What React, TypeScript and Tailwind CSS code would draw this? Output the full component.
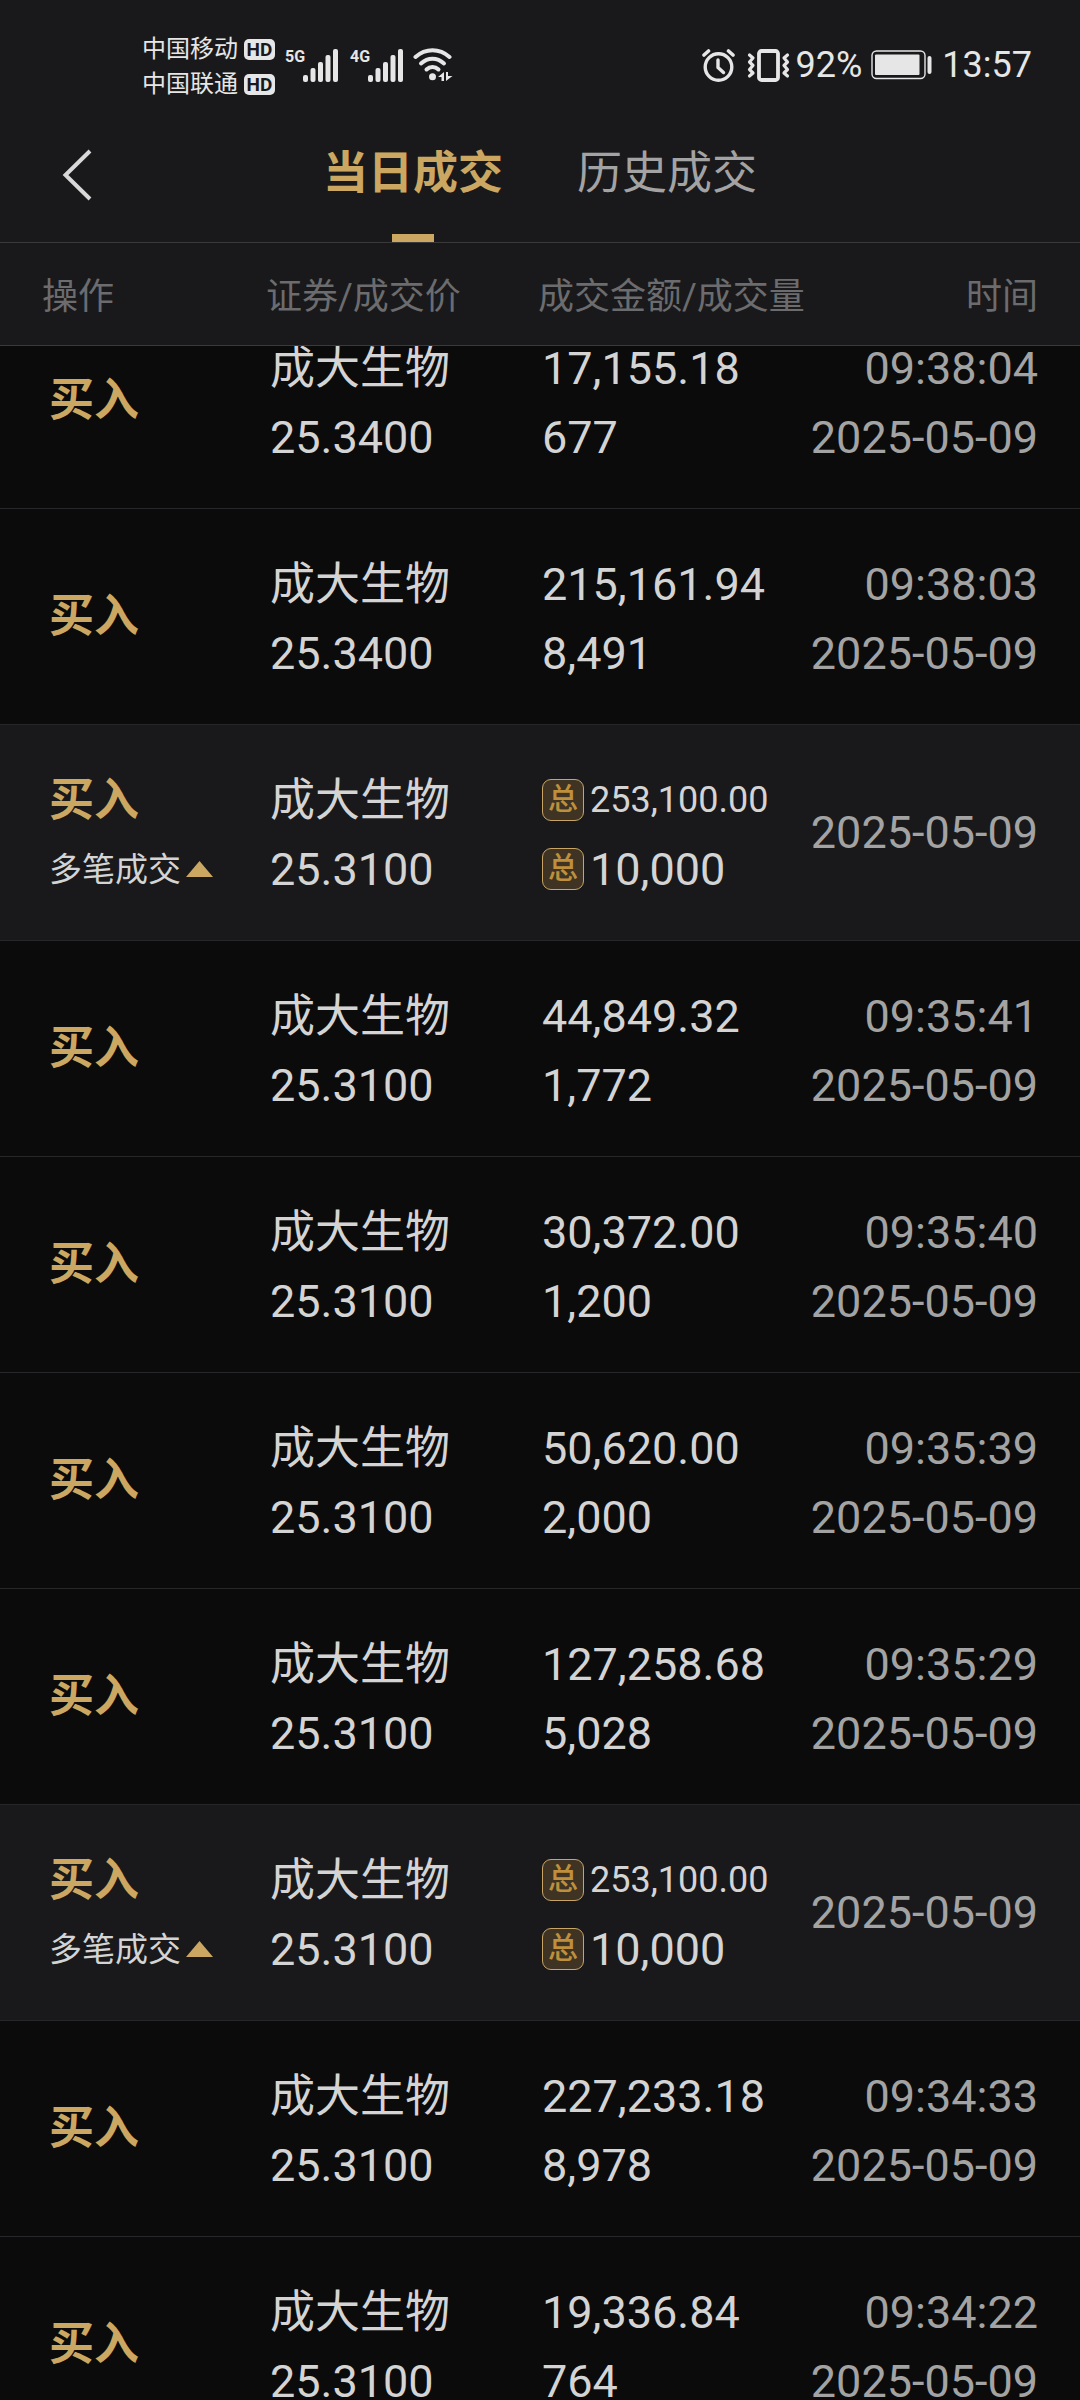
import React, { useLayoutEffect, useRef, useState } from 'react';
import clsx from 'clsx';

type Deal = {
  name: string;
  price: string;
  amount: string;
  volume: string;
  time?: string;
  date: string;
  // merged rows show totals instead of a time
  merged?: boolean;
};

const DATE = '2025-05-09';
const NAME = '成大生物';

const deals: Deal[] = [
  { name: NAME, price: '25.3400', amount: '17,155.18', volume: '677', time: '09:38:04', date: DATE },
  { name: NAME, price: '25.3400', amount: '215,161.94', volume: '8,491', time: '09:38:03', date: DATE },
  { name: NAME, price: '25.3100', amount: '253,100.00', volume: '10,000', date: DATE, merged: true },
  { name: NAME, price: '25.3100', amount: '44,849.32', volume: '1,772', time: '09:35:41', date: DATE },
  { name: NAME, price: '25.3100', amount: '30,372.00', volume: '1,200', time: '09:35:40', date: DATE },
  { name: NAME, price: '25.3100', amount: '50,620.00', volume: '2,000', time: '09:35:39', date: DATE },
  { name: NAME, price: '25.3100', amount: '127,258.68', volume: '5,028', time: '09:35:29', date: DATE },
  { name: NAME, price: '25.3100', amount: '253,100.00', volume: '10,000', date: DATE, merged: true },
  { name: NAME, price: '25.3100', amount: '227,233.18', volume: '8,978', time: '09:34:33', date: DATE },
  { name: NAME, price: '25.3100', amount: '19,336.84', volume: '764', time: '09:34:22', date: DATE },
];

const tabs = ['当日成交', '历史成交'];

const SignalBars: React.FC = () => (
  <svg width="35" height="33" viewBox="0 0 35 33" fill="currentColor">
    <rect x="0" y="26" width="5" height="7" rx="2" />
    <rect x="7.5" y="19" width="5" height="14" rx="2" />
    <rect x="15" y="13" width="5" height="20" rx="2" />
    <rect x="22.5" y="6" width="5" height="27" rx="2" />
    <rect x="30" y="0" width="5" height="33" rx="2" />
  </svg>
);

const WifiIcon: React.FC = () => (
  <svg width="40" height="34" viewBox="0 0 40 34" fill="none" stroke="currentColor" strokeWidth="4" strokeLinecap="round">
    <path d="M2.5 9C12.5 0 26.5 0 36.5 9" />
    <path d="M8 15.5C15 9 24 9 31 15.5" />
    <path d="M13.5 21.5C17 18 22 18 25.5 21.5" />
    <circle cx="19.5" cy="28.8" r="3.5" fill="currentColor" stroke="none" />
    <path d="M31 24v9h-2.5v-4h-3.5zM33 33v-9h2v4h4.5z" fill="currentColor" stroke="none" />
  </svg>
);

const AlarmIcon: React.FC = () => (
  <svg width="33" height="33" viewBox="0 0 33 33" fill="none" stroke="currentColor" strokeLinecap="round" strokeLinejoin="round">
    <circle cx="16.5" cy="18" r="13.3" strokeWidth="3.4" />
    <path d="M16 11v7.5l5.5 5" strokeWidth="3.4" />
    <path d="M2 6l4.5-4M31 6l-4.5-4" strokeWidth="3.6" />
  </svg>
);

const VibrateIcon: React.FC = () => (
  <svg width="43" height="33" viewBox="0 0 43 33" fill="none" stroke="currentColor" strokeLinecap="round" strokeLinejoin="round">
    <rect x="12" y="2" width="19" height="29" rx="2.5" strokeWidth="3.8" />
    <path d="M2.5 6l3.500 3-3.5 4 3.5 3.5-3.5 4 3.5 3.5-3.5 3" strokeWidth="3.2" />
    <path d="M40.5 6l-3.5 3 3.5 4-3.5 3.5 3.5 4-3.5 3.5 3.5 3" strokeWidth="3.2" />
  </svg>
);

const BatteryIcon: React.FC = () => (
  <svg width="61" height="30" viewBox="0 0 61 30" fill="none">
    <rect x="1" y="1" width="53" height="27.5" rx="4.5" stroke="currentColor" strokeWidth="1.4" />
    <rect x="4" y="4.5" width="44.5" height="20.5" rx="1" fill="currentColor" />
    <rect x="56.5" y="6" width="4" height="18" rx="2" fill="currentColor" />
  </svg>
);

const Carrier: React.FC<{ name: string }> = ({ name }) => (
  <div className="flex items-center gap-[6px] text-[24px] leading-[35px]">
    {name}
    <span className="w-[31px] h-[21px] rounded-[5px] bg-[#e6e6e6] text-[#19191b] text-[19px] leading-[21px] font-bold text-center">
      HD
    </span>
  </div>
);

const Network: React.FC<{ label: string }> = ({ label }) => (
  <div className="flex items-start">
    <span className="w-[18px] text-[16px] leading-4 font-bold">{label}</span>
    <SignalBars />
  </div>
);

const StatusBar: React.FC = () => (
  <div className="h-[110px] pt-[20px] pl-[142px] pr-[48px] flex items-center justify-between text-[#e6e6e6]">
    <div className="flex items-center">
      <div className="pt-1">
        <Carrier name="中国移动" />
        <Carrier name="中国联通" />
      </div>
      <div className="ml-[10px] flex items-center gap-3">
        <Network label="5G" />
        <Network label="4G" />
      </div>
      <div className="ml-[10px]">
        <WifiIcon />
      </div>
    </div>
    <div className="flex items-center text-[36px] leading-[42px]">
      <AlarmIcon />
      <span className="ml-3 mr-[6px]">
        <VibrateIcon />
      </span>
      92%
      <span className="ml-[9px] mr-[10px]">
        <BatteryIcon />
      </span>
      13:57
    </div>
  </div>
);

const TotalBadge: React.FC = () => (
  <span className="w-[42px] h-[42px] rounded-[9px] border border-[#c8a567] bg-[#3f3323] text-[#be8f3c] text-[30px] leading-[38px] font-medium text-center">
    总
  </span>
);

const DealRow: React.FC<{ deal: Deal }> = ({ deal }) => {
  const { merged } = deal;
  const cell = 'border-b border-[#272729] p-0 whitespace-nowrap';

  return (
    <tr className={clsx('h-[216px]', merged && 'bg-[#19191b]')}>
      <td className={clsx(cell, 'pl-[49px]', merged && 'pt-1')}>
        <div className="font-bold text-[#cba762]">买入</div>
        {merged && (
          <button className="flex items-center gap-[5px] text-[33px] leading-[69px]">
            多笔成交
            <svg width="27" height="16" viewBox="0 0 27 16" fill="#cba762">
              <path d="M13.5 0L27 16H0z" />
            </svg>
          </button>
        )}
      </td>
      <td className={clsx(cell, 'pl-1 pt-1')}>
        <div>{deal.name}</div>
        <div>{deal.price}</div>
      </td>
      <td className={clsx(cell, 'pl-1 pt-1')}>
        <div className="flex items-center gap-[6px]">
          {merged && <TotalBadge />}
          <span className={clsx(merged && 'text-[36px]')}>{deal.amount}</span>
        </div>
        <div className="flex items-center gap-[6px]">
          {merged && <TotalBadge />}
          {deal.volume}
        </div>
      </td>
      <td className={clsx(cell, 'pr-[42px] text-right text-[#a3a3a3]', !merged && 'pt-1')}>
        {deal.time && <div>{deal.time}</div>}
        <div>{deal.date}</div>
      </td>
    </tr>
  );
};

export default function App() {
  const [activeTab, setActiveTab] = useState(0);
  const listRef = useRef<HTMLDivElement>(null);

  useLayoutEffect(() => {
    if (listRef.current) listRef.current.scrollTop = 53;
  }, []);

  const th = 'h-[103px] p-0 pt-[6px] border-b border-[#3a3a3c] bg-[#19191b] font-normal';

  return (
    <div className="h-screen flex flex-col overflow-hidden bg-[#0b0b0b] text-[#d4d4d4] font-['Roboto','Noto_Sans_CJK_SC',sans-serif]">
      <header className="shrink-0 bg-[#19191b] border-b border-[#3a3a3c]">
        <StatusBar />
        <nav className="relative h-[132px] flex justify-center gap-[74px]">
          <button aria-label="返回" className="absolute left-[60px] top-[39px] text-[#d8d8d8]">
            <svg width="34" height="52" viewBox="0 0 34 52" fill="none" stroke="currentColor" strokeWidth="4">
              <path d="M30 2L5.5 26L30 50" />
            </svg>
          </button>
          {tabs.map((tab, i) => (
            <button
              key={tab}
              onClick={() => setActiveTab(i)}
              className={clsx(
                'pt-1 flex flex-col items-center justify-between text-[45px] leading-[120px]',
                i === activeTab ? 'font-bold text-[#cba762]' : 'text-[#a3a3a3]'
              )}
            >
              {tab}
              {i === activeTab && <span className="w-[42px] h-2 bg-[#cba762]" />}
            </button>
          ))}
        </nav>
      </header>

      <div ref={listRef} className="flex-1 min-h-0 overflow-y-auto [scrollbar-width:none]">
        <table className="w-full table-fixed border-separate border-spacing-0 text-left text-[45px] leading-[69px]">
          <thead className="sticky top-0 text-[36px] leading-[42px] text-[#6c6c6e]">
            <tr>
              <th className={clsx(th, 'w-[266px] pl-[42px]')}>操作</th>
              <th className={clsx(th, 'w-[272px]')}>证券/成交价</th>
              <th className={th}>成交金额/成交量</th>
              <th className={clsx(th, 'w-[270px] pr-[42px] text-right')}>时间</th>
            </tr>
          </thead>
          <tbody>
            {deals.map((deal, i) => (
              <DealRow key={i} deal={deal} />
            ))}
          </tbody>
        </table>
      </div>
    </div>
  );
}
